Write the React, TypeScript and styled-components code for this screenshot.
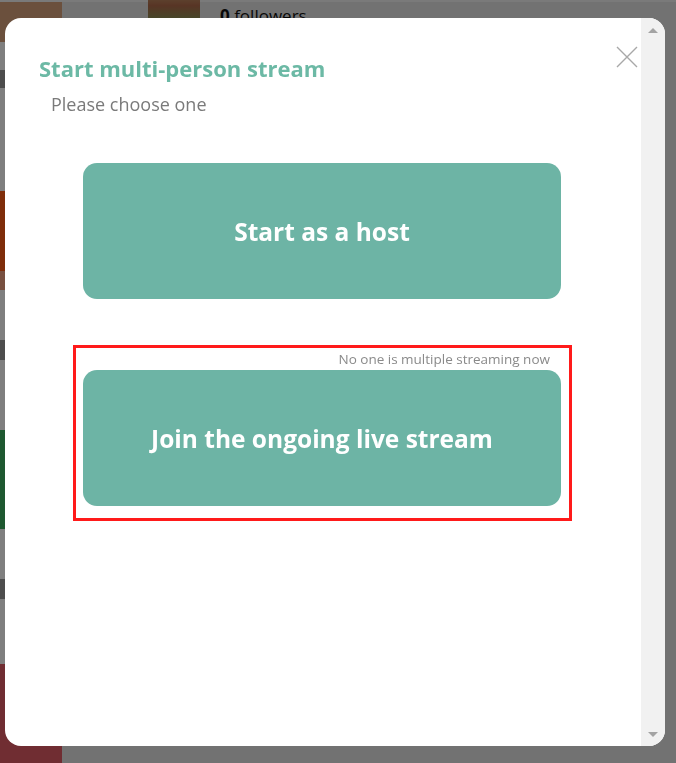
import React from 'react'
import styled, { createGlobalStyle } from 'styled-components'

const teal = '#6db4a5'

const GlobalStyle = createGlobalStyle`
  html, body {
    margin: 0;
    padding: 0;
    width: 676px;
    height: 763px;
    overflow: hidden;
    font-family: "Open Sans", "Liberation Sans", sans-serif;
  }
  * { box-sizing: border-box; }
`

const Page = styled.div`
  display: flex;
  width: 676px;
  height: 763px;
  background: #e4e4e4;
  border-top: 2px solid #f4f4f4;
`

const Sidebar = styled.div`
  width: 62px;
  display: flex;
  flex-direction: column;
  background: #ffffff;
`

const SideBlock = styled.div<{ $h: number; $c: string }>`
  height: ${p => p.$h}px;
  background: ${p => p.$c};
`

const Main = styled.div`
  flex: 1;
  display: flex;
  flex-direction: column;
`

const Header = styled.div`
  display: flex;
  align-items: flex-start;
  gap: 20px;
  padding-left: 86px;
  height: 40px;
`

const Thumb = styled.div`
  width: 52px;
  height: 34px;
  margin-top: -10px;
  border-radius: 8px;
  background: linear-gradient(180deg, #c8a070 0%, #b06a4a 40%, #7aa25a 100%);
`

const Followers = styled.span`
  font-size: 17px;
  line-height: 24px;
  margin-top: 2px;
  color: #111;
  b { font-weight: 700; }
`

const Overlay = styled.div`
  position: fixed;
  inset: 0;
  background: rgba(0, 0, 0, 0.5);
  display: flex;
  padding: 18px 11px 17px 5px;
`

const Modal = styled.div`
  flex: 1;
  display: flex;
  background: #fff;
  border-radius: 16px;
  overflow: hidden;
`

const Content = styled.div`
  position: relative;
  flex: 1;
  display: flex;
  flex-direction: column;
  padding: 37px 0 0 34px;
`

const Title = styled.h2`
  margin: 0;
  font-size: 22px;
  line-height: 26px;
  font-weight: 700;
  color: #6cb9a5;
`

const Subtitle = styled.p`
  margin: 11px 0 0 12px;
  font-size: 18px;
  line-height: 25px;
  color: #7a7a7a;
`

const Choice = styled.button`
  width: 478px;
  height: 136px;
  border: none;
  border-radius: 14px;
  background: ${teal};
  color: #fff;
  font-family: inherit;
  font-size: 24.5px;
  font-weight: 700;
  cursor: pointer;
`

const HostButton = styled(Choice)`
  margin: 46px 0 0 44px;
`

const Highlight = styled.div`
  width: 499px;
  margin: 46px 0 0 34px;
  border: 3px solid #ff1a1a;
  padding: 2px 8px 12px 7px;
  display: flex;
  flex-direction: column;
  align-items: flex-end;
`

const Note = styled.span`
  font-size: 13.5px;
  line-height: 18px;
  color: #8a8a8a;
  padding-right: 11px;
  margin-bottom: 2px;
`

const CloseButton = styled.button`
  position: absolute;
  top: 28px;
  right: 3px;
  width: 22px;
  height: 22px;
  padding: 0;
  border: none;
  background: none;
  cursor: pointer;
`

const Scrollbar = styled.div`
  width: 24px;
  background: #f1f1f1;
  display: flex;
  flex-direction: column;
  justify-content: space-between;
  align-items: center;
  padding: 10px 0 9px;
`

const Arrow = styled.div<{ $down?: boolean }>`
  width: 0;
  height: 0;
  border-left: 5px solid transparent;
  border-right: 5px solid transparent;
  ${p => p.$down ? 'border-top: 5px solid #a3a3a3;' : 'border-bottom: 5px solid #a3a3a3;'}
`

const sideBlocks: [number, string][] = [
  [40, '#d6a07a'],
  [28, '#ffffff'],
  [18, '#999999'],
  [104, '#ffffff'],
  [80, '#ff5a14'],
  [20, '#f0a080'],
  [50, '#ffffff'],
  [20, '#9a9a9a'],
  [70, '#ffffff'],
  [100, '#3cb060'],
  [50, '#ffffff'],
  [20, '#9a9a9a'],
  [65, '#ffffff'],
  [100, '#e05a64'],
]

const App = () => {
  return (
    <>
      <GlobalStyle />
      <Page>
        <Sidebar>
          {sideBlocks.map(([h, c], i) => (
            <SideBlock key={i} $h={h} $c={c} />
          ))}
        </Sidebar>
        <Main>
          <Header>
            <Thumb />
            <Followers><b>0</b> followers</Followers>
          </Header>
        </Main>
      </Page>
      <Overlay>
        <Modal>
          <Content>
            <Title>Start multi-person stream</Title>
            <Subtitle>Please choose one</Subtitle>
            <HostButton>Start as a host</HostButton>
            <Highlight>
              <Note>No one is multiple streaming now</Note>
              <Choice>Join the ongoing live stream</Choice>
            </Highlight>
            <CloseButton aria-label="Close">
              <svg width="22" height="22" viewBox="0 0 22 22">
                <path d="M1 1 L21 21 M21 1 L1 21" stroke="#a8a8a8" strokeWidth="1.4" />
              </svg>
            </CloseButton>
          </Content>
          <Scrollbar>
            <Arrow />
            <Arrow $down />
          </Scrollbar>
        </Modal>
      </Overlay>
    </>
  )
}

export default App
